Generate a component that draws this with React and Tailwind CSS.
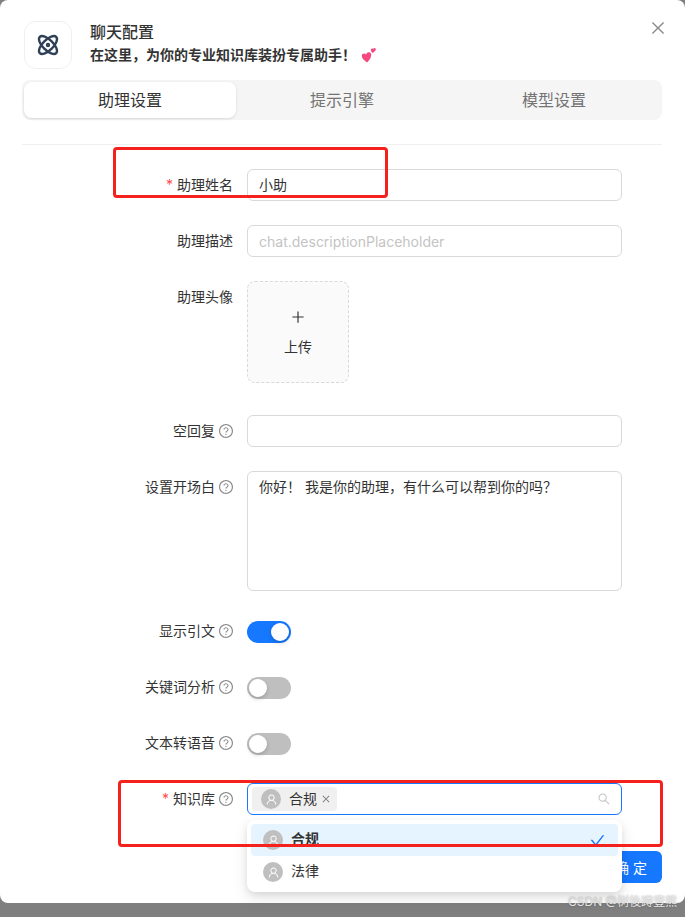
import { Atom } from "lucide-react";
import {
  AiOutlineClose, AiOutlinePlus, AiOutlineQuestionCircle,
  AiOutlineSearch, AiOutlineCheck, AiOutlineUser,
} from "react-icons/ai";

/* Label cell of a form row: optional red star, text, optional help icon */
function Label({ text, required, help, low }) {
  return (
    <div className={`w-[211px] flex justify-end items-center gap-1 text-[14px] text-[#333] ${low ? "h-[22px] pb-0.5" : "h-8"}`}>
      {required && <span className="text-[#ff4d4f] text-[14px] leading-none">*</span>}
      <span className="mb-0.5">{text}</span>
      {help && <AiOutlineQuestionCircle className="text-[16px] text-[#8c8c8c] -ml-px -mr-px" />}
    </div>
  );
}

function Row({ label, required, help, low, className = "mb-6", children }) {
  return (
    <div className={`flex items-start gap-3.5 ${className}`}>
      <Label text={label} required={required} help={help} low={low} />
      {children}
    </div>
  );
}

function Toggle({ on }) {
  return (
    <div className={`w-11 h-[22px] rounded-full p-0.5 flex ${on ? "bg-[#1677ff] justify-end" : "bg-[#bfbfbf] justify-start"}`}>
      <div className="w-[18px] h-[18px] rounded-full bg-white shadow-[0_2px_4px_rgba(0,35,11,0.2)]" />
    </div>
  );
}

function Avatar() {
  return (
    <div className="w-5 h-5 rounded-full bg-[#bfbfbf] flex items-center justify-center text-white text-[13px]">
      <AiOutlineUser />
    </div>
  );
}

const inputCls = "w-[375px] h-8 rounded-md border border-[#d9d9d9] bg-white px-[11px] flex items-center text-[14px] text-[#333]";

export default function App() {
  return (
    <div className="h-[917px] bg-[#7f7f7f] overflow-hidden relative" style={{ fontFamily: "Inter, 'Noto Sans CJK SC', sans-serif" }}>
      <div className="h-[903px] w-[685px] bg-white rounded-lg relative">
        <AiOutlineClose className="absolute right-[18px] top-[19px] text-[18px] text-[#8c8c8c]" />

        {/* Header */}
        <div className="pl-6 pt-[21px] flex gap-[18px]">
          <div className="w-12 h-12 rounded-xl border border-[#eeeff2] flex items-center justify-center text-[#2f4159]">
            <Atom size={24} strokeWidth={2.4} />
          </div>
          <div>
            <div className="text-[16px] leading-[22px] font-medium text-[#333]">聊天配置</div>
            <div className="flex items-center text-[14px] leading-5 font-semibold text-[#333] mt-0.5">
              在这里，为你的专业知识库装扮专属助手！
              <svg width="16" height="16" viewBox="0 0 16 16" className="ml-[5px]">
                <path d="M6 15.5C3 13.5.6 11.3.8 8.6c.1-1.9 2.5-3 4.3-1.2C6 4.9 8.8 4.8 9.9 6.6c1 1.900-.3 5.600-3.900 8.900z" fill="#f5487f" />
                <path d="M11.8 6C10.5 4.900 9.600 3.700 9.900 2.400c.3-1 1.500-1.400 2.200-.5.6-1 2-1.100 2.600-.1.500 1.100-.6 2.800-2.900 4.200z" fill="#f5487f" />
              </svg>
            </div>
          </div>
        </div>

        {/* Tabs */}
        <div className="ml-[22px] mr-[23px] mt-[11px] h-10 rounded-lg bg-[#f5f5f5] p-0.5 flex text-[16px] text-[#737373]">
          <div className="w-[212px] h-9 rounded-lg bg-white shadow-[0_1px_3px_rgba(0,0,0,0.12)] flex items-center justify-center text-[#333]">助理设置</div>
          <div className="w-[212px] flex items-center justify-center">提示引擎</div>
          <div className="flex-1 flex items-center justify-center">模型设置</div>
        </div>

        <div className="ml-[22px] mr-[23px] mt-6 border-t border-[#f0f0f0]" />

        {/* Form */}
        <div className="pl-[22px] pt-6">
          <Row label="助理姓名" required>
            <div className={`${inputCls} pb-0.5`}>小助</div>
          </Row>
          <Row label="助理描述">
            <div className={`${inputCls} text-[#c4c4c4]`}>chat.descriptionPlaceholder</div>
          </Row>
          <Row label="助理头像" className="mb-8">
            <div className="w-[102px] h-[102px] pt-0.5 rounded-lg border border-dashed border-[#d9d9d9] bg-[#fafafa] flex flex-col items-center justify-center text-[14px] text-[#333]">
              <AiOutlinePlus className="text-[16px] mb-[11px]" />
              <span>上传</span>
            </div>
          </Row>
          <Row label="空回复" help>
            <div className={inputCls} />
          </Row>
          <Row label="设置开场白" help className="mb-[30px]">
            <div className={`${inputCls} !h-[120px] !items-start pt-1`}>你好！ 我是你的助理，有什么可以帮到你的吗？</div>
          </Row>
          <Row label="显示引文" help low className="mb-[34px]">
            <Toggle on />
          </Row>
          <Row label="关键词分析" help low className="mb-[34px]">
            <Toggle />
          </Row>
          <Row label="文本转语音" help low className="mb-7">
            <Toggle />
          </Row>
          <Row label="知识库" required help className="mb-9">
            <div className="relative">
              <div className={`${inputCls} !border-[#1677ff] !px-1 justify-between`}>
                <div className="h-6 w-[85px] rounded bg-[#f0f0f0] pl-[9px] flex items-center gap-2 text-[14px]">
                  <Avatar />
                  <span className="mb-0.5">合规</span>
                  <AiOutlineClose className="text-[10px] text-[#737373] -ml-1" />
                </div>
                <AiOutlineSearch className="text-[14px] text-[#c4c4c4] mr-[6px]" />
              </div>
              {/* Dropdown */}
              <div className="absolute z-10 left-0 top-[37px] w-[375px] h-[72px] rounded-lg bg-white p-1 shadow-[0_6px_16px_rgba(0,0,0,0.1),0_3px_6px_rgba(0,0,0,0.08)] text-[14px] text-[#333]">
                <div className="h-8 rounded bg-[#e6f4ff] pl-3 pr-3 flex items-center gap-2 font-semibold">
                  <Avatar />
                  <span className="flex-1 mb-[3px]">合规</span>
                  <AiOutlineCheck className="text-[17px] text-[#1677ff]" />
                </div>
                <div className="h-8 pl-3 flex items-center gap-2">
                  <Avatar />
                  <span className="mb-[3px]">法律</span>
                </div>
              </div>
            </div>
          </Row>
          <div className="flex justify-end pr-[23px]">
            <button className="w-[62px] h-8 rounded-md bg-[#1677ff] text-white text-[14px]">确 定</button>
          </div>
        </div>

        {/* Red annotation boxes drawn over the screenshot */}
        <div className="absolute z-20 left-[113px] top-[147px] w-[275px] h-[51px] border-[3px] border-[#f5211d] rounded" />
        <div className="absolute z-20 left-[118px] top-[780px] w-[545px] h-[67px] border-[3px] border-[#f5211d] rounded" />
      </div>

      <div className="absolute left-[568px] top-[894px] text-[12px] leading-4 text-[#e8e8e8] [text-shadow:0_0_2px_rgba(0,0,0,0.35)]">CSDN @树後蹲壹熊</div>
    </div>
  );
}
